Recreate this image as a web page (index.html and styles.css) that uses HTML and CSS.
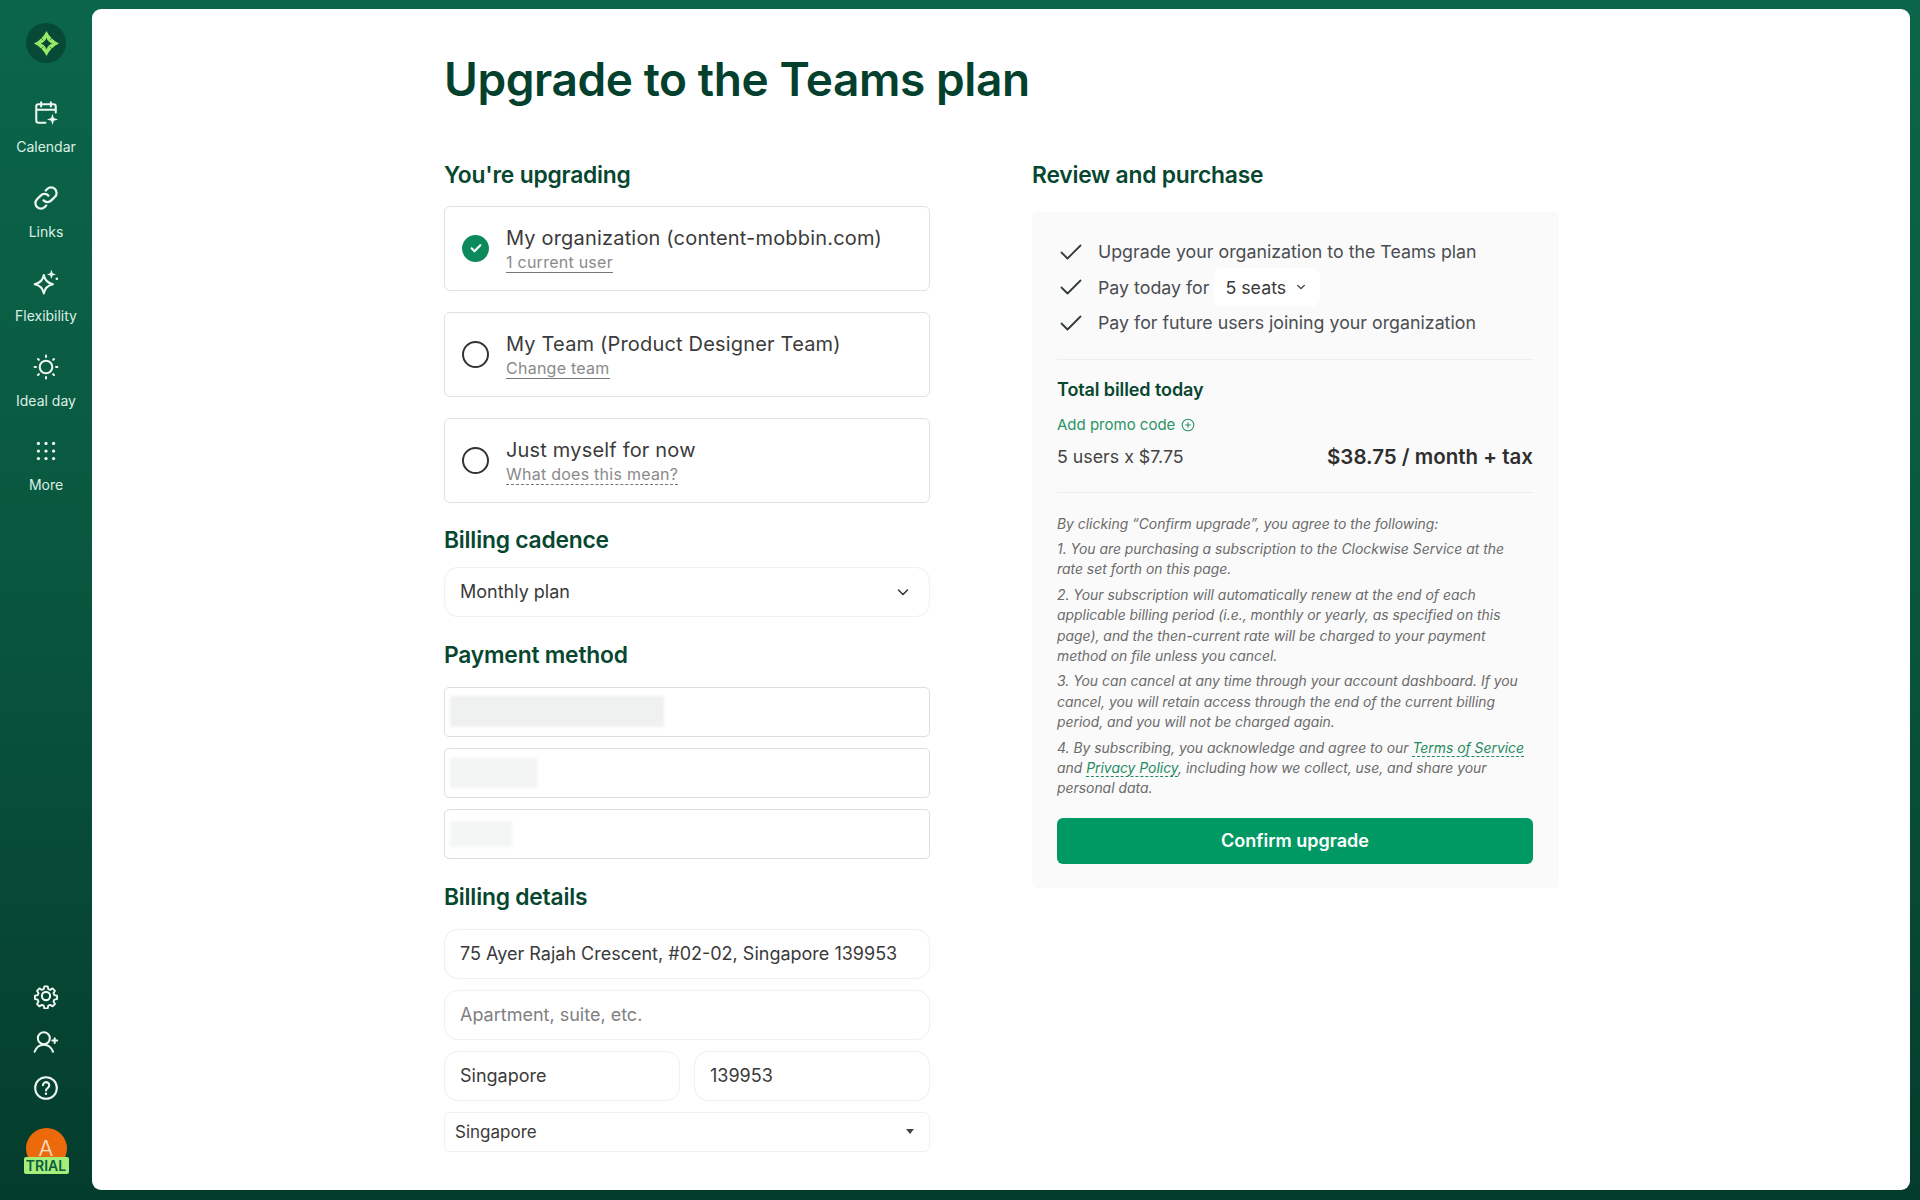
FILE: index.html
```html
<!DOCTYPE html>
<html lang="en">
<head>
<meta charset="utf-8">
<title>Upgrade to the Teams plan</title>
<link rel="stylesheet" href="styles.css">
</head>
<body>
<div class="app">
  <nav class="side">
    <div class="side-top">
      <div class="logo">
        <svg viewBox="0 0 28 28" width="27" height="27"><path class="logo-star" d="M14 1C17 7 21 11 27 14C21 17 17 21 14 27C11 21 7 17 1 14C7 11 11 7 14 1Z"/><path class="logo-core" d="M14 8C14.700 10.700 17.300 13.300 20 14C17.300 14.700 14.700 17.300 14 20C13.300 17.300 10.700 14.700 8 14C10.700 13.300 13.300 10.700 14 8Z"/><path class="logo-cut" d="M6.500 6.500L10.500 10.500M21.500 6.500L17.500 10.500M6.500 21.500L10.500 17.500M21.500 21.500L17.500 17.500"/></svg>
      </div>
      <a class="nav-item">
        <svg class="ico" viewBox="0 0 24 24"><path d="M11.500 21H5a2 2 0 0 1-2-2V6a2 2 0 0 1 2-2h14a2 2 0 0 1 2 2v5.500M3 9h18M7.500 2v4M16.500 2v4"/><path class="fill" d="M18 12.800l1.200 3.900 3.900 1.200-3.900 1.200-1.200 3.900-1.200-3.900-3.900-1.200 3.900-1.200z"/></svg>
        <span>Calendar</span>
      </a>
      <a class="nav-item">
        <svg class="ico" viewBox="0 0 24 24"><g transform="translate(12 12) scale(1.120) translate(-12 -12)"><path d="M10 14a4.500 4.500 0 0 0 6.400 0l3-3a4.500 4.500 0 0 0-6.400-6.400l-1.200 1.200"/><path d="M14 10a4.500 4.500 0 0 0-6.400 0l-3 3a4.500 4.500 0 0 0 6.400 6.400l1.200-1.200"/></g></svg>
        <span>Links</span>
      </a>
      <a class="nav-item">
        <svg class="ico" viewBox="0 0 24 24"><path d="M10 5.500c.9 4.800 3.700 7.600 8.500 8.500-4.800.9-7.600 3.700-8.500 8.500-.9-4.800-3.700-7.600-8.500-8.500 4.800-.9 7.600-3.700 8.500-8.500z"/><path class="fill" d="M17 .8l1.100 3.100 3.100 1.100-3.100 1.100-1.100 3.100-1.100-3.100-3.100-1.100 3.100-1.100z"/><circle class="fill" cx="22" cy="9" r="1.200"/></svg>
        <span>Flexibility</span>
      </a>
      <a class="nav-item">
        <svg class="ico" viewBox="0 0 24 24"><circle cx="12" cy="12" r="5.800"/><path d="M12 1.500v1.200M12 21.300v1.200M1.500 12h1.200M21.300 12h1.200M4.600 4.600l.8.800M18.600 18.600l.8.800M4.600 19.400l.8-.8M18.600 5.400l.8-.8"/></svg>
        <span>Ideal day</span>
      </a>
      <a class="nav-item">
        <svg class="ico" viewBox="0 0 24 24"><g class="fill"><circle cx="5" cy="5" r="1.500"/><circle cx="12" cy="5" r="1.500"/><circle cx="19" cy="5" r="1.500"/><circle cx="5" cy="12" r="1.500"/><circle cx="12" cy="12" r="1.500"/><circle cx="19" cy="12" r="1.500"/><circle cx="5" cy="19" r="1.500"/><circle cx="12" cy="19" r="1.500"/><circle cx="19" cy="19" r="1.500"/></g></svg>
        <span>More</span>
      </a>
    </div>
    <div class="side-bottom">
      <svg class="ico" viewBox="0 0 24 24"><circle cx="12" cy="12" r="3.800"/><path d="M10.300 2.300h3.400l.6 2.800 1.900.8 2.400-1.500 2.400 2.400-1.500 2.400.8 1.900 2.800.6v3.400l-2.800.6-.8 1.900 1.500 2.400-2.400 2.400-2.400-1.500-1.900.8-.6 2.800h-3.400l-.6-2.800-1.900-.8-2.400 1.500-2.400-2.400 1.500-2.400-.8-1.900-2.800-.6v-3.400l2.800-.6.8-1.900-1.500-2.400 2.400-2.400 2.400 1.500 1.900-.8z" transform="translate(12 12) scale(.92) translate(-12 -12)"/></svg>
      <svg class="ico" viewBox="0 0 24 24"><circle cx="10" cy="8.500" r="5.500"/><path d="M1.500 21c1.400-3.800 4.600-6.500 8.500-6.500s7 2.700 8.500 6.500"/><path d="M20 8.500v4.500M17.800 10.700h4.500"/></svg>
      <svg class="ico" viewBox="0 0 24 24"><circle cx="12" cy="12" r="10"/><path d="M9.200 9.500a2.900 2.900 0 1 1 4.500 2.400c-1 .7-1.700 1.200-1.700 2.400"/><circle class="fill" cx="12" cy="17.300" r="1.100"/></svg>
      <div class="avatar">
        <span class="avatar-letter">A</span>
        <span class="trial">TRIAL</span>
      </div>
    </div>
  </nav>

  <main class="panel">
    <h1 class="title">Upgrade to the Teams plan</h1>
    <div class="cols">
      <section class="col-left">
        <h2 class="h2 h2-first">You're upgrading</h2>
        <div class="options">
          <div class="option">
            <span class="radio radio-on"><svg viewBox="0 0 12 12" width="14" height="14"><path d="M2.200 6.300l2.500 2.500 5-5.200"/></svg></span>
            <div class="option-text">
              <div class="option-title">My organization (content-mobbin.com)</div>
              <a class="option-sub">1 current user</a>
            </div>
          </div>
          <div class="option">
            <span class="radio"></span>
            <div class="option-text">
              <div class="option-title">My Team (Product Designer Team)</div>
              <a class="option-sub">Change team</a>
            </div>
          </div>
          <div class="option">
            <span class="radio"></span>
            <div class="option-text">
              <div class="option-title">Just myself for now</div>
              <a class="option-sub option-sub-dashed">What does this mean?</a>
            </div>
          </div>
        </div>

        <h2 class="h2 h2-cadence">Billing cadence</h2>
        <div class="field field-select">
          <span>Monthly plan</span>
          <svg class="chev" viewBox="0 0 12 12" width="12" height="12"><path d="M1.500 4l4.500 4.500L10.500 4"/></svg>
        </div>

        <h2 class="h2 h2-pay">Payment method</h2>
        <div class="stripe-list">
          <div class="stripe"><span class="blur blur-a"></span></div>
          <div class="stripe"><span class="blur blur-b"></span></div>
          <div class="stripe"><span class="blur blur-c"></span></div>
        </div>

        <h2 class="h2 h2-details">Billing details</h2>
        <div class="address">
          <div class="field">75 Ayer Rajah Crescent, #02-02, Singapore 139953</div>
          <div class="field field-ph">Apartment, suite, etc.</div>
          <div class="field-row">
            <div class="field">Singapore</div>
            <div class="field">139953</div>
          </div>
          <div class="country">
            <span>Singapore</span>
            <span class="caret"></span>
          </div>
        </div>
      </section>

      <section class="col-right">
        <h2 class="h2 h2-review">Review and purchase</h2>
        <div class="review">
          <ul class="checks">
            <li><svg class="tick" viewBox="0 0 22 16"><path d="M1.500 8.500l6 6L20.500 1.500"/></svg><span>Upgrade your organization to the Teams plan</span></li>
            <li><svg class="tick" viewBox="0 0 22 16"><path d="M1.500 8.500l6 6L20.500 1.500"/></svg><span>Pay today for</span><span class="seats">5 seats<svg class="chev chev-sm" viewBox="0 0 12 12" width="10" height="10"><path d="M2 4l4 4 4-4"/></svg></span></li>
            <li><svg class="tick" viewBox="0 0 22 16"><path d="M1.500 8.500l6 6L20.500 1.500"/></svg><span>Pay for future users joining your organization</span></li>
          </ul>
          <hr class="rule rule-a">
          <h3 class="total">Total billed today</h3>
          <a class="promo">Add promo code
            <svg class="promo-ico" viewBox="0 0 14 14" width="14" height="14"><circle cx="7" cy="7" r="5.800"/><path d="M7 4.200v5.600M4.200 7h5.600"/></svg>
          </a>
          <div class="price-row">
            <span class="price-calc">5 users x $7.75</span>
            <strong class="price">$38.75 / month + tax</strong>
          </div>
          <hr class="rule rule-b">
          <div class="legal">
            <p>By clicking “Confirm upgrade”, you agree to the following:</p>
            <p>1. You are purchasing a subscription to the Clockwise Service at the rate set forth on this page.</p>
            <p>2. Your subscription will automatically renew at the end of each applicable billing period (i.e., monthly or yearly, as specified on this page), and the then-current rate will be charged to your payment method on file unless you cancel.</p>
            <p>3. You can cancel at any time through your account dashboard. If you cancel, you will retain access through the end of the current billing period, and you will not be charged again.</p>
            <p>4. By subscribing, you acknowledge and agree to our <a class="legal-link">Terms of Service</a> and <a class="legal-link">Privacy Policy</a>, including how we collect, use, and share your personal data.</p>
          </div>
          <button class="confirm" type="button">Confirm upgrade</button>
        </div>
      </section>
    </div>
  </main>
</div>
</body>
</html>
```

FILE: styles.css
```css
* { box-sizing: border-box; }
html, body { margin: 0; height: 100%; }
body {
  font-family: Inter, "Liberation Sans", sans-serif;
  color: #333;
  background: #04402f;
}
.app {
  width: 1920px;
  height: 1200px;
  display: flex;
  overflow: hidden;
  padding: 9px 10px 10px 0;
  background: linear-gradient(180deg, #0b6649 0%, #09583f 45%, #043c2c 100%);
}
.side {
  width: 92px;
  flex: none;
  display: flex;
  flex-direction: column;
  justify-content: space-between;
  align-items: center;
  padding: 14px 0 21px;
}
.side-top, .side-bottom { display: flex; flex-direction: column; align-items: center; }
.logo {
  width: 40px;
  height: 40px;
  border-radius: 50%;
  background: #064a36;
  display: flex;
  align-items: center;
  justify-content: center;
  margin-bottom: 37px;
}
.logo-star { fill: #93e865; }
.logo-core { fill: #064a36; }
.logo-cut { fill: none; stroke: #064a36; stroke-width: .6; }
.nav-item {
  height: 84.500px;
  width: 92px;
  display: flex;
  flex-direction: column;
  align-items: center;
  color: #dcefe6;
  font-size: 14px;
  line-height: 17px;
}
.nav-item span { margin-top: 12px; }
.ico {
  width: 26px;
  height: 26px;
  flex: none;
  fill: none;
  stroke: #eef7f2;
  stroke-width: 1.900;
  stroke-linecap: round;
  stroke-linejoin: round;
}
.ico .fill { fill: #eef7f2; stroke: none; }
.side-bottom { gap: 20px; }
.avatar {
  position: relative;
  width: 41px;
  height: 41px;
  border-radius: 50%;
  background: #ec6a0c;
  display: flex;
  justify-content: center;
  margin-top: 7px;
}
.avatar-letter { color: #fde7d2; font-size: 22px; line-height: 41px; font-weight: 300; }
.trial {
  position: absolute;
  left: -2px;
  bottom: -5px;
  width: 45px;
  height: 17px;
  border-radius: 2px;
  background: #a4ee7a;
  color: #0d5c3f;
  font-size: 14px;
  font-weight: 600;
  line-height: 18px;
  text-align: center;
}
.panel {
  flex: 1;
  background: #fff;
  border-radius: 9px;
  padding: 0 0 0 352px;
  overflow: hidden;
}
.title {
  margin: 0;
  padding-top: 42px;
  height: 131px;
  font-size: 46px;
  line-height: 56px;
  font-weight: 600;
  color: #04402e;
  letter-spacing: -0.42px;
}
.cols { display: flex; gap: 102px; align-items: flex-start; }
.col-left { width: 486px; flex: none; }
.col-right { width: 527px; flex: none; }
.h2 {
  margin: 0;
  font-size: 22.800px;
  line-height: 28px;
  font-weight: 600;
  color: #08472f;
  letter-spacing: -0.2px;
}
.h2-first { margin-top: 21px; margin-bottom: 17px; }
.h2-review { margin-top: 21px; margin-bottom: 23px; }
.h2-cadence { margin-top: 23px; margin-bottom: 13px; }
.h2-pay { margin-top: 24px; margin-bottom: 18px; }
.h2-details { margin-top: 24px; margin-bottom: 18px; }
.options { display: flex; flex-direction: column; gap: 21.500px; }
.option {
  height: 84.500px;
  border: 1.500px solid #dfe1e1;
  border-radius: 6px;
  display: flex;
  align-items: center;
  padding-left: 17px;
  gap: 18px;
}
.radio {
  width: 27px;
  height: 27px;
  border-radius: 50%;
  border: 2px solid #333;
  flex: none;
  display: flex;
  align-items: center;
  justify-content: center;
}
.radio-on { background: #0d8a5c; border-color: #0d8a5c; }
.radio-on svg { fill: none; stroke: #fff; stroke-width: 1.800; stroke-linecap: round; stroke-linejoin: round; }
.option-text { display: flex; flex-direction: column; align-items: flex-start; margin-left: -1px; padding-top: 1px; }
.option-title { font-size: 20px; line-height: 28px; color: #3b3b3b; letter-spacing: .18px; }
.option-sub {
  font-size: 16px;
  line-height: 20px;
  color: #8a8a8a;
  border-bottom: 1.500px solid #777;
  letter-spacing: .25px;
}
.option-sub-dashed { border-bottom: 1.500px dashed #777; }
.field {
  height: 50px;
  border: 1px solid #f0f1f1;
  border-radius: 14px;
  padding: 0 15px;
  display: flex;
  align-items: center;
  font-size: 18px;
  color: #3a3a3a;
  background: #fff;
  box-shadow: 0 0 1px rgba(0,0,0,.04);
}
.field-select { justify-content: space-between; padding-right: 20px; }
.field-ph { color: #7f7f7f; }
.chev { fill: none; stroke: #333; stroke-width: 1.500; stroke-linecap: round; stroke-linejoin: round; }
.chev-sm { margin-left: 10px; }
.stripe-list { display: flex; flex-direction: column; gap: 11px; }
.stripe {
  height: 50px;
  border: 1.500px solid #dcdfdf;
  border-radius: 5px;
  display: flex;
  align-items: center;
  padding-left: 5px;
}
.blur { display: block; filter: blur(1.500px); }
.blur-a { width: 214px; height: 31px; background: #eff1f0; }
.blur-b { width: 87px; height: 30px; background: #f2f3f3; }
.blur-c { width: 62px; height: 26px; background: #f4f5f5; }
.address { display: flex; flex-direction: column; gap: 11px; }
.field-row { display: flex; gap: 14px; }
.field-row .field { flex: 1; }
.country {
  height: 40px;
  border: 1px solid #f0f1f1;
  border-radius: 6px;
  padding: 0 15px 0 10px;
  display: flex;
  align-items: center;
  justify-content: space-between;
  font-size: 17px;
  color: #3a3a3a;
}
.caret {
  width: 0;
  height: 0;
  border-left: 4.500px solid transparent;
  border-right: 4.500px solid transparent;
  border-top: 5px solid #444;
}
.review {
  height: 676px;
  background: #fafafa;
  border-radius: 5px;
  padding: 22px 26px 0 25px;
}
.checks {
  list-style: none;
  margin: 0;
  padding: 0;
  display: flex;
  flex-direction: column;
}
.checks li {
  height: 35.500px;
  display: flex;
  align-items: center;
  font-size: 17.800px;
  color: #4a4d52;
}
.tick {
  width: 22px;
  height: 16px;
  margin-left: 3px;
  margin-right: 16px;
  flex: none;
  fill: none;
  stroke: #333b3f;
  stroke-width: 1.800;
  stroke-linecap: round;
  stroke-linejoin: round;
}
.seats {
  display: inline-flex;
  align-items: center;
  height: 38px;
  margin-left: 5px;
  padding: 0 14px 0 11px;
  background: #fff;
  border-radius: 8px;
  color: #3a3a3a;
  font-size: 17.800px;
}
.rule { border: 0; height: 1px; background: #eeeeee; margin: 0; }
.rule-a { margin-top: 18px; }
.total {
  margin: 18px 0 0;
  font-size: 18px;
  line-height: 24px;
  font-weight: 600;
  color: #08472f;
  letter-spacing: -.1px;
}
.promo {
  margin-top: 12px;
  display: flex;
  align-items: center;
  gap: 6px;
  font-size: 15px;
  line-height: 22px;
  color: #2a9467;
}
.promo-ico { fill: none; stroke: #2a9467; stroke-width: 1.100; }
.price-row {
  margin-top: 8px;
  display: flex;
  justify-content: space-between;
  align-items: center;
  line-height: 26px;
}
.price-calc { font-size: 17.800px; color: #444; }
.price { font-size: 20.500px; font-weight: 600; color: #2e2e2e; }
.rule-b { margin-top: 22px; }
.legal { margin-top: 21px; font-size: 13.900px; font-style: italic; line-height: 20.400px; color: #6b6b6b; }
.legal p { margin: 0 0 5px; }
.legal-link {
  color: #1f8a5f;
  border-bottom: 1.500px dashed #1f8a5f;
}
.confirm {
  display: block;
  width: 100%;
  height: 46px;
  margin-top: 19px;
  border: 0;
  border-radius: 6px;
  background: #019963;
  color: #fff;
  font: 600 18px/1 Inter, "Liberation Sans", sans-serif;
}
```
